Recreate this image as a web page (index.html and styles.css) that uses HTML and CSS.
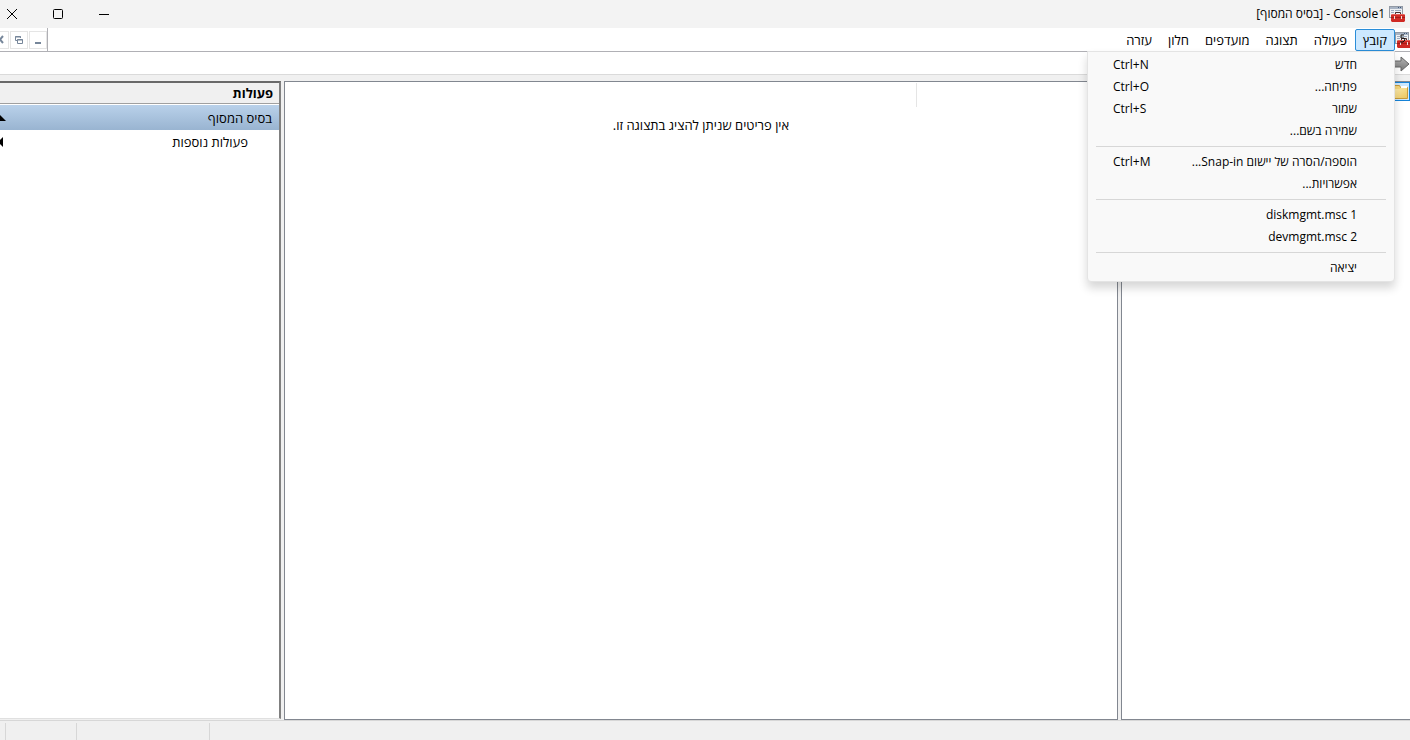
FILE: index.html
```
<!DOCTYPE html>
<html lang="he" dir="rtl">
<head>
  <meta charset="UTF-8">
  <meta name="viewport" content="width=device-width, initial-scale=1.0">
  <title>Console1 - [בסיס המסוף]</title>
  <link rel="stylesheet" href="styles.css">
</head>
<body>
  <svg class="defs" aria-hidden="true">
    <defs>
      <linearGradient id="folder-fill" x1="0" y1="0" x2="1" y2="1">
        <stop offset="0" stop-color="#fff0b4"/>
        <stop offset="1" stop-color="#ecc55d"/>
      </linearGradient>
      <linearGradient id="arrow-fill" x1="0" y1="0" x2="0" y2="1">
        <stop offset="0" stop-color="#b5b5b5"/>
        <stop offset="1" stop-color="#777"/>
      </linearGradient>
    </defs>
    <symbol id="console" viewBox="0 0 16 16">
      <rect x="0.5" y="0.5" width="13" height="11" fill="#eef1f4" stroke="#929aa5"/>
      <path d="M1 1h12v2H1z" fill="#a8b4c4"/>
      <path d="M9 1h1v1H9zM11 1h1v1h-1z" fill="#40587c"/>
      <path d="M2 4h3v1H2zM2 6h3v1H2zM6 4h6v1H6zM6 6h1v1H6z" fill="#9caabd"/>
      <path d="M6.500 8V6.500h5V8" fill="none" stroke="#4b2c2c"/>
      <path d="M3 8h12l1 1v6l-1 1H3l-1-1V9z" fill="#cf2a25"/>
      <path d="M3 8h12v1H3z" fill="#e6625a"/>
      <path d="M2 11h14v1H2z" fill="#a51c18"/>
      <path d="M5 10h1v3H5zM12 10h1v3h-1z" fill="#f0dddb"/>
    </symbol>
  </svg>

  <div class="window">
    <header class="titlebar">
      <svg class="app-icon"><use href="#console"/></svg>
      <h1>Console1 - [בסיס המסוף]</h1>
      <div class="window-controls">
        <button type="button" aria-label="מזער">
          <svg viewBox="0 0 12 12"><path d="M1 6.500h10"/></svg>
        </button>
        <button type="button" aria-label="הגדל">
          <svg viewBox="0 0 12 12"><rect x="1.500" y="1.500" width="9" height="9" rx="1"/></svg>
        </button>
        <button type="button" aria-label="סגור">
          <svg viewBox="0 0 12 12"><path d="M1 1l10 10M11 1L1 11"/></svg>
        </button>
      </div>
    </header>

    <nav class="menubar">
      <svg class="app-icon" viewBox="0 0 16 16">
        <use href="#console" width="16" height="16"/>
        <path d="M9 3H6v3h3l1 2-2 2H5" fill="none" stroke="#111"/>
      </svg>
      <div class="menu">
        <button type="button" class="menu-title open" aria-expanded="true">קובץ</button>
        <div class="popup">
          <button type="button"><span>חדש</span><kbd>Ctrl+N</kbd></button>
          <button type="button"><span>פתיחה...</span><kbd>Ctrl+O</kbd></button>
          <button type="button"><span>שמור</span><kbd>Ctrl+S</kbd></button>
          <button type="button"><span>שמירה בשם...</span></button>
          <hr>
          <button type="button"><span>הוספה/הסרה של יישום Snap-in...</span><kbd>Ctrl+M</kbd></button>
          <button type="button"><span>אפשרויות...</span></button>
          <hr>
          <button type="button"><span dir="ltr">diskmgmt.msc 1</span></button>
          <button type="button"><span dir="ltr">devmgmt.msc 2</span></button>
          <hr>
          <button type="button"><span>יציאה</span></button>
        </div>
      </div>
      <button type="button" class="menu-title">פעולה</button>
      <button type="button" class="menu-title">תצוגה</button>
      <button type="button" class="menu-title">מועדפים</button>
      <button type="button" class="menu-title">חלון</button>
      <button type="button" class="menu-title">עזרה</button>
      <div class="child-controls">
        <button type="button" aria-label="מזער חלון">
          <svg viewBox="0 0 10 10"><path d="M2 8h6"/></svg>
        </button>
        <button type="button" aria-label="שחזר חלון">
          <svg viewBox="0 0 10 10"><path d="M3 5.500H1.500v-4h5V3M1 2h6" class="thin"/><path d="M3.500 4.500h5v4h-5zM3 5h6" class="thin"/></svg>
        </button>
        <button type="button" aria-label="סגור חלון">
          <svg viewBox="0 0 10 10"><path d="M2 1l6 7M8 1L2 8"/></svg>
        </button>
      </div>
    </nav>

    <div class="toolbar">
      <button type="button" aria-label="קדימה">
        <svg viewBox="0 0 16 16"><path d="M0 5h7V1l8 7-8 7v-4H0z" fill="url(#arrow-fill)" stroke="#666"/></svg>
      </button>
    </div>

    <main class="panes">
      <section class="tree">
        <button type="button" class="node" aria-label="בסיס המסוף">
          <svg viewBox="0 0 16 16">
            <path d="M0.500 1.500h6l1 2h7v11h-14z" fill="#f6d77d" stroke="#c89a3a"/>
            <path d="M8 2h6v2H8z" fill="#fff"/>
            <path d="M1 5h6l1-1h6v10H1z" fill="url(#folder-fill)"/>
          </svg>
        </button>
      </section>

      <section class="results">
        <div class="columns"></div>
        <p>אין פריטים שניתן להציג בתצוגה זו.</p>
      </section>

      <aside class="actions">
        <h2>פעולות</h2>
        <button type="button" class="group">
          <span>בסיס המסוף</span>
          <svg viewBox="0 0 12 6"><path d="M6 0l6 6H0z"/></svg>
        </button>
        <button type="button" class="more">
          <span>פעולות נוספות</span>
          <svg viewBox="0 0 5 10"><path d="M0 5l5-5v10z"/></svg>
        </button>
      </aside>
    </main>

    <footer class="statusbar">
      <div class="message"></div>
      <div class="progress"></div>
      <div class="state"></div>
    </footer>
  </div>
</body>
</html>
```

FILE: styles.css
```
* {
  box-sizing: border-box;
}
body {
  margin: 0;
  font-family: "Open Sans", "Noto Sans", "Liberation Sans", sans-serif;
  font-size: 13px;
  line-height: 16px;
  color: #000;
  background: #f0f0f0;
}
button {
  padding: 0;
  border: none;
  background: none;
  font: inherit;
  color: inherit;
}
svg {
  display: block;
  flex: none;
}
.defs {
  position: absolute;
  width: 0;
  height: 0;
}
.window {
  display: flex;
  flex-direction: column;
  height: 100vh;
  overflow: hidden;
}
.app-icon {
  width: 16px;
  height: 16px;
}

/* title bar */
.titlebar {
  display: flex;
  align-items: center;
  gap: 4px;
  height: 28px;
  flex: none;
  padding-right: 5px;
  background: #f3f3f3;
}
.titlebar h1 {
  margin: 0;
  font-size: 12px;
  font-weight: normal;
}
.window-controls {
  display: flex;
  margin-right: auto;
  margin-left: -11px;
}
.window-controls button {
  display: flex;
  align-items: center;
  justify-content: center;
  width: 46px;
  height: 28px;
}
.window-controls svg {
  width: 12px;
  height: 12px;
  fill: none;
  stroke: #000;
}

/* menu bar */
.menubar {
  display: flex;
  align-items: center;
  height: 24px;
  flex: none;
  background: #fff;
  border-bottom: 1px solid #b0b0b5;
}
.menubar > .app-icon {
  margin-right: -1px;
}
.menu {
  position: relative;
}
.menu-title {
  display: block;
  height: 22px;
  padding: 0 8px;
}
.menu-title.open {
  padding: 0 7px;
  background: #cce8ff;
  border: 1px solid #2a8dd8;
  border-radius: 2px;
}
.popup {
  position: absolute;
  top: 100%;
  right: 0;
  z-index: 1;
  width: 308px;
  padding: 2px 0;
  background: #f9f9f9;
  border: 1px solid #e4e4e4;
  border-radius: 0 0 4px 4px;
  box-shadow: 0 6px 10px rgba(0, 0, 0, 0.16);
  font-size: 12px;
}
.popup button {
  display: flex;
  align-items: center;
  justify-content: space-between;
  width: 100%;
  height: 22px;
  padding: 0 37px 0 25px;
  white-space: nowrap;
}
.popup kbd {
  width: 44px;
  font: inherit;
  direction: ltr;
  text-align: left;
}
.popup hr {
  height: 1px;
  margin: 4px 8px;
  border: none;
  background: #d7d7d7;
}
.child-controls {
  display: flex;
  align-items: center;
  gap: 1px;
  width: 48px;
  height: 23px;
  margin-right: auto;
  overflow: hidden;
  border-right: 1px solid #b0b0b5;
}
.child-controls button {
  display: flex;
  align-items: center;
  justify-content: center;
  flex: none;
  width: 18px;
  height: 18px;
  border: 1px solid #e5e5e5;
}
.child-controls svg {
  width: 10px;
  height: 10px;
  fill: none;
  stroke: #76869a;
  stroke-width: 2;
}
.child-controls .thin {
  stroke-width: 1;
}

/* toolbar */
.toolbar {
  display: flex;
  align-items: flex-end;
  height: 23px;
  flex: none;
  padding-bottom: 2px;
  background: #fff;
  border-bottom: 1px solid #dadada;
}
.toolbar svg {
  width: 16px;
  height: 16px;
}

/* panes */
.panes {
  display: flex;
  gap: 3px;
  flex: 1;
  min-height: 0;
  padding-top: 6px;
}
.tree {
  width: 289px;
  flex: none;
  background: #fff;
  border: 1px solid #828790;
  border-right: none;
}
.node {
  display: flex;
  align-items: center;
  width: 19px;
  height: 19px;
  background: #cce8ff;
  border: 1px solid #1683d8;
}
.node svg {
  width: 16px;
  height: 16px;
}
.results {
  flex: 1;
  background: #fff;
  border: 1px solid #828790;
}
.columns {
  width: 201px;
  height: 24px;
  margin-top: 1px;
  border-left: 1px solid #e5e5e5;
}
.results p {
  margin: 10px 0;
  text-align: center;
}
.actions {
  width: 281px;
  flex: none;
  margin-bottom: 1px;
  background: #fff;
  border-top: 2px solid #696969;
  border-right: 2px solid #808080;
  border-bottom: 1px solid #e0e0e0;
}
.actions h2 {
  height: 21px;
  margin: 0 0 1px;
  padding: 2px 6px;
  background: #f0f0f0;
  border-bottom: 1px solid #a0a0a0;
  font-size: 13px;
  font-weight: bold;
}
.actions button {
  display: flex;
  align-items: center;
  justify-content: space-between;
  width: 100%;
  height: 24px;
}
.actions .group {
  height: 25px;
  padding-right: 7px;
  background: linear-gradient(#b9d1ea, #99b4d1);
}
.actions .group svg {
  width: 12px;
  height: 6px;
  margin-left: -6px;
}
.actions .more {
  padding-right: 31px;
}
.actions .more svg {
  width: 5px;
  height: 10px;
  margin-left: -2px;
}

/* status bar */
.statusbar {
  display: flex;
  height: 20px;
  flex: none;
  padding-top: 2px;
  border-top: 1px solid #d7d7d7;
}
.statusbar div {
  border-left: 1px solid #d7d7d7;
}
.message {
  flex: 1;
}
.progress {
  width: 133px;
}
.state {
  width: 71px;
  margin-left: 5px;
}
```
